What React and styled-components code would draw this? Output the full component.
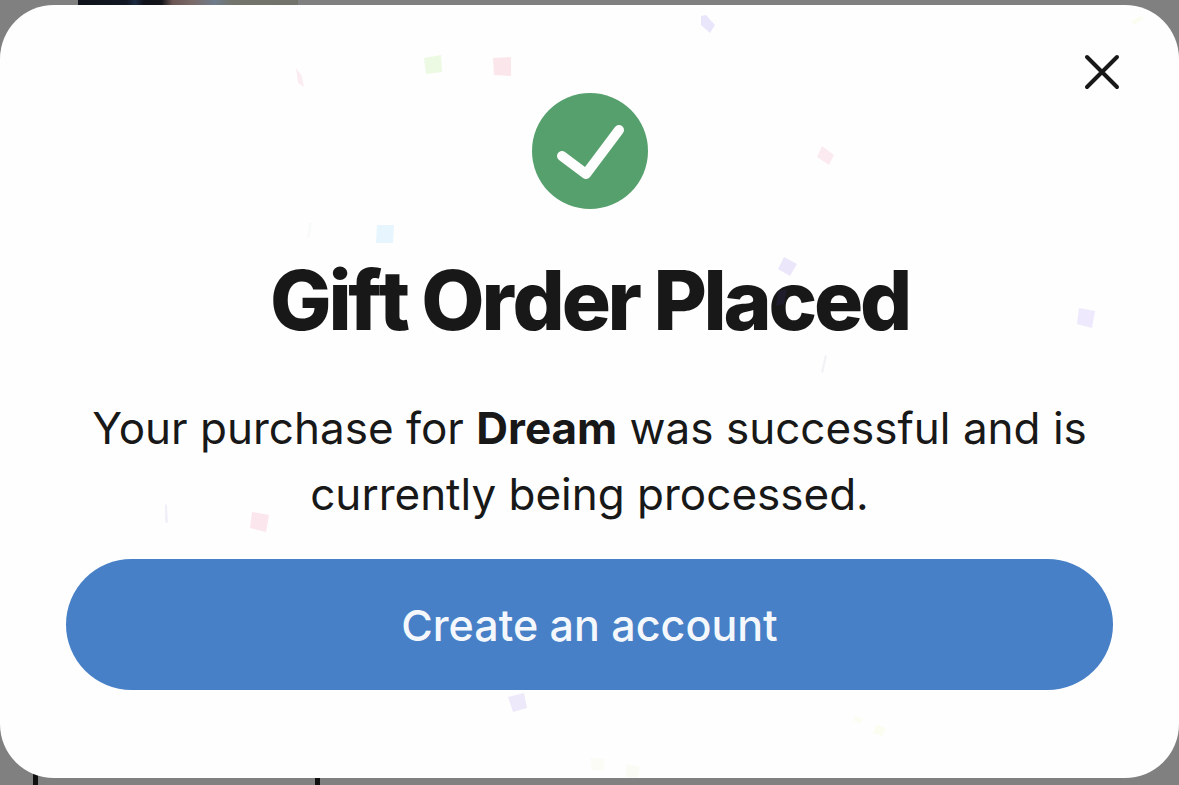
import React from "react";
import styled, { createGlobalStyle } from "styled-components";

const GlobalStyle = createGlobalStyle`
  *, *::before, *::after { box-sizing: border-box; }
  body {
    margin: 0;
    background: #808080;
    color: #181818;
    font-family: Inter, "Liberation Sans", sans-serif;
  }
`;

const Screen = styled.div`
  display: grid;
  min-height: 100vh;
  overflow: hidden;
`;

const PageBehind = styled.div`
  grid-area: 1 / 1;
  display: flex;
  flex-direction: column;
  justify-content: space-between;
  align-items: flex-start;
`;

const Photo = styled.div`
  width: 220px;
  height: 40px;
  margin-left: 78px;
  background: linear-gradient(90deg, #10131a 0%, #121824 22%, #1d2b42 26%, #10131a 30%, #14151a 38%, #6b5654 43%, #7a6a68 52%, #6f7c8c 62%, #73746c 70%, #72736b 100%);
`;

const Outline = styled.div`
  width: 287px;
  height: 60px;
  margin-left: 33px;
  border: solid #101010;
  border-width: 0 5px;
`;

const Dialog = styled.section`
  grid-area: 1 / 1;
  position: relative;
  align-self: start;
  display: flex;
  flex-direction: column;
  align-items: center;
  margin: 5px 0 6px;
  padding: 88px 66px;
  border-radius: 54px;
  background: #fefefe;
  text-align: center;
`;

const Confetti = styled.svg`
  position: absolute;
  inset: 0;
  width: 100%;
  height: 100%;
  pointer-events: none;
`;

const CloseButton = styled.button`
  position: absolute;
  top: 43px;
  right: 53px;
  display: flex;
  padding: 0;
  border: 0;
  background: none;
  color: #181818;
  cursor: pointer;
`;

const StatusIcon = styled.svg`
  display: block;
  width: 116px;
  height: 116px;
`;

const Title = styled.h1`
  margin: 44px 0 0;
  font-size: 82px;
  line-height: 96px;
  font-weight: 800;
  font-kerning: none;
  letter-spacing: -0.04em;
`;

const Message = styled.p`
  margin: 46px 0 32px;
  font-size: 44px;
  line-height: 66px;
`;

const PrimaryButton = styled.button`
  width: 100%;
  height: 131px;
  border: 0;
  border-radius: 66px;
  background: #4780c7;
  color: #f4f8fd;
  font-family: inherit;
  font-size: 43px;
  font-weight: 500;
  cursor: pointer;
`;

const pieces = [
  { shape: "701,16 706,15 715,25 710,33 701,25", color: "#e9e6fb" },
  { shape: "424,58 441,55 442,72 426,74", color: "#ecf9e3" },
  { shape: "493,58 511,57 511,76 494,75", color: "#fbe6eb" },
  { shape: "296,68 302,76 304,87 298,83", color: "#fbecef" },
  { shape: "822,146 834,155 829,165 817,157", color: "#fbebf0" },
  { shape: "377,225 394,225 393,243 376,243", color: "#e6f5fe" },
  { shape: "309,223 312,223 310,238 307,238", color: "#f9fafa" },
  { shape: "784,257 797,264 790,276 778,269", color: "#ece6fb" },
  { shape: "1079,308 1095,311 1092,328 1077,324", color: "#eee9fc" },
  { shape: "825,355 827,356 823,373 821,372", color: "#f2f2f6" },
  { shape: "165,504 167,505 168,523 165,522", color: "#f1eff8" },
  { shape: "252,512 269,515 266,532 250,528", color: "#fbe6ed" },
  { shape: "508,697 524,693 527,708 513,712", color: "#eee8fb" },
  { shape: "1131,21 1142,16 1144,18 1134,25", color: "#fcfdf1" },
  { shape: "877,724 886,729 882,736 873,733", color: "#fbfdf0" },
  { shape: "855,715 864,719 860,724 853,721", color: "#fcfdf5" },
  { shape: "590,758 604,759 604,770 592,771", color: "#fcfcf6" },
  { shape: "626,764 640,767 638,778 626,777", color: "#fbfbf6" },
];

export default function App() {
  return (
    <>
      <GlobalStyle />
      <Screen>
        <PageBehind aria-hidden="true">
          <Photo />
          <Outline />
        </PageBehind>
        <Dialog role="dialog" aria-modal="true" aria-labelledby="order-title">
          <StatusIcon viewBox="0 0 116 116" fill="none" aria-hidden="true">
            <circle cx="58" cy="58" r="58" fill="#56a06d" />
            <path
              d="M30 63L54 81L87 37"
              stroke="#fefefe"
              strokeWidth="10"
              strokeLinecap="round"
              strokeLinejoin="round"
            />
          </StatusIcon>
          <Title id="order-title">Gift Order Placed</Title>
          <Message>
            Your purchase for <strong>Dream</strong> was successful and is currently being processed.
          </Message>
          <PrimaryButton type="button">Create an account</PrimaryButton>
          <Confetti viewBox="0 5 1179 773" preserveAspectRatio="xMidYMid slice" aria-hidden="true">
            {pieces.map((piece) => (
              <polygon key={piece.shape} points={piece.shape} fill={piece.color} />
            ))}
            <polygon points="778,291 787,289 784,304 776,306" fill="#4b39a8" opacity="0.14" />
          </Confetti>
          <CloseButton type="button" aria-label="Close">
            <svg width="48" height="48" viewBox="0 0 48 48" fill="none" aria-hidden="true">
              <path d="M9 9L39 39M39 9L9 39" stroke="currentColor" strokeWidth="4" strokeLinecap="round" />
            </svg>
          </CloseButton>
        </Dialog>
      </Screen>
    </>
  );
}
